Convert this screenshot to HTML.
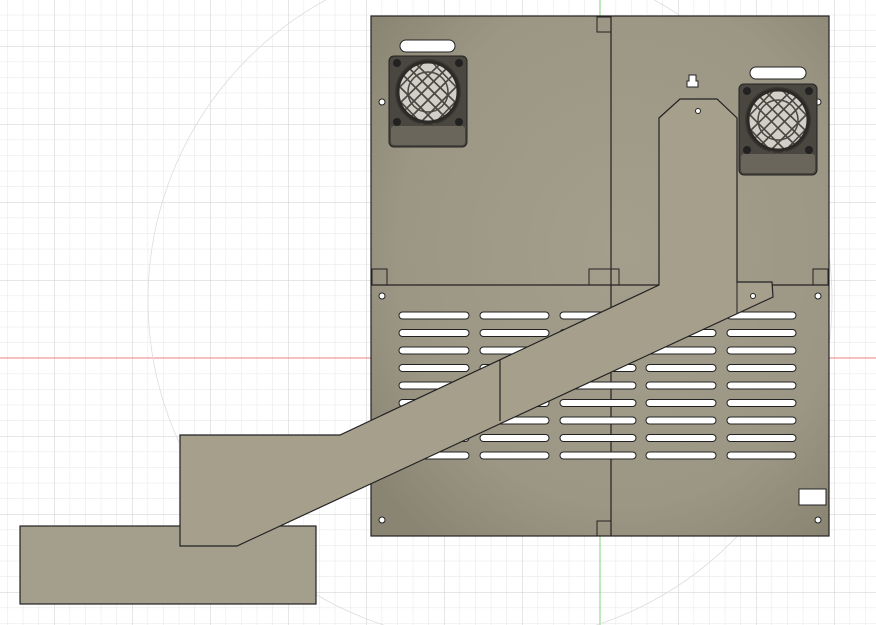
<!DOCTYPE html>
<html><head><style>html,body{margin:0;padding:0;background:#fff;width:876px;height:625px;overflow:hidden}</style></head>
<body>
<svg width="876" height="625" xmlns="http://www.w3.org/2000/svg">
<defs>
<pattern id="g" x="600" y="358" width="15.6" height="15.6" patternUnits="userSpaceOnUse">
<path d="M0 0V15.6M0 0H15.6" stroke="#e6e6e6" stroke-width="1" fill="none"/>
</pattern>
<pattern id="G" x="600" y="358" width="78" height="78" patternUnits="userSpaceOnUse">
<path d="M0 0V78M0 0H78" stroke="#cdcdcd" stroke-width="1" fill="none"/>
</pattern>
<radialGradient id="sh" cx="0.55" cy="0.45" r="0.7">
<stop offset="0" stop-color="#a49e8c"/><stop offset="0.7" stop-color="#9c9684"/><stop offset="1" stop-color="#8a8473"/>
</radialGradient>
<g id="fan">
<rect x="0" y="0" width="78" height="91" rx="5" fill="#4a4740" stroke="#222" />
<rect x="2" y="70" width="74" height="19" rx="3" fill="#6a665c"/>
<circle cx="39" cy="36" r="33" fill="#3a3732"/>
<circle cx="39" cy="36" r="30" fill="#d2cfc8"/>
<g stroke="#4a4740" stroke-width="1.6">
<path d="M15 20L55 60M20 12L63 55M27 8L68 48M10 30L47 67M8 42L35 70M43 6L70 34"/>
<path d="M63 20L23 60M58 12L15 55M51 8L10 48M68 30L31 67M70 42L43 70M35 6L8 34"/>
</g>
<circle cx="39" cy="36" r="20" fill="none" stroke="#4a4740" stroke-width="1.5"/>
<circle cx="39" cy="36" r="30" fill="none" stroke="#2c2a26" stroke-width="3"/>
<circle cx="8" cy="7" r="4" fill="#222"/><circle cx="70" cy="7" r="4" fill="#222"/>
<circle cx="8" cy="66" r="4" fill="#222"/><circle cx="70" cy="66" r="4" fill="#222"/>
</g>
</defs>
<rect width="876" height="625" fill="#fff"/>
<rect width="876" height="625" fill="url(#g)"/>
<rect width="876" height="625" fill="url(#G)"/>
<line x1="0" y1="358" x2="876" y2="358" stroke="#f08080" stroke-width="1"/>
<line x1="600" y1="0" x2="600" y2="625" stroke="#7cd67c" stroke-width="1"/>
<circle cx="490" cy="300" r="342" fill="none" stroke="#ddd" stroke-width="0.8"/>

<rect x="371" y="16" width="458" height="520" fill="url(#sh)" stroke="#222" stroke-width="1.2"/>
<line x1="611" y1="16" x2="611" y2="536" stroke="#222" stroke-width="1.2"/>
<line x1="371" y1="285" x2="829" y2="285" stroke="#222" stroke-width="1.2"/>
<g fill="none" stroke="#222" stroke-width="1">
<rect x="597" y="17" width="14" height="15"/><rect x="597" y="521" width="14" height="15"/>
<rect x="372" y="269" width="15" height="16"/><rect x="589" y="269" width="30" height="16"/>
<rect x="813" y="269" width="15" height="16"/>
</g>
<g fill="#fff" stroke="#222" stroke-width="1">
<circle cx="382" cy="102" r="3"/><circle cx="382" cy="296" r="3"/><circle cx="818" cy="296" r="3"/>
<circle cx="382" cy="520" r="3"/><circle cx="818" cy="520" r="3"/><circle cx="818" cy="102" r="3"/>
<rect x="400" y="40" width="55" height="12" rx="6"/>
<rect x="750" y="67" width="56" height="12" rx="6"/>
<path d="M689 75h7v6h2v6h-11v-6h2z"/>
<rect x="799" y="489" width="27" height="16"/>
</g>
<g fill="#fff" stroke="#222" stroke-width="1">
<g id="row">
<rect x="399" y="312" width="70" height="7" rx="3.5"/>
<rect x="480" y="312" width="69" height="7" rx="3.5"/>
<rect x="560" y="312" width="76" height="7" rx="3.5"/>
<rect x="646" y="312" width="70" height="7" rx="3.5"/>
<rect x="727" y="312" width="69" height="7" rx="3.5"/>
</g>
<use href="#row" y="17.5"/><use href="#row" y="35"/><use href="#row" y="52.5"/><use href="#row" y="70"/>
<use href="#row" y="87.5"/><use href="#row" y="105"/><use href="#row" y="122.5"/><use href="#row" y="140"/>
</g>
<use href="#fan" x="389" y="56"/>
<use href="#fan" x="739" y="84"/>

<rect x="20" y="526" width="296" height="78" fill="#a49e8c" stroke="#222" stroke-width="1.2"/>
<path d="M659 118L680 99H717L737 118V282H772L773 297L237 546H180V435H340L659 285Z" fill="#a59f8c" stroke="#222" stroke-width="1.2"/>
<line x1="737" y1="282" x2="737" y2="314" stroke="#222"/>
<circle cx="698" cy="111" r="2.5" fill="#fff" stroke="#222"/>
<circle cx="753" cy="296" r="2.5" fill="#fff" stroke="#222"/>
<line x1="500" y1="360" x2="500" y2="421" stroke="#222" stroke-width="1.2"/>
</svg>
</body></html>
